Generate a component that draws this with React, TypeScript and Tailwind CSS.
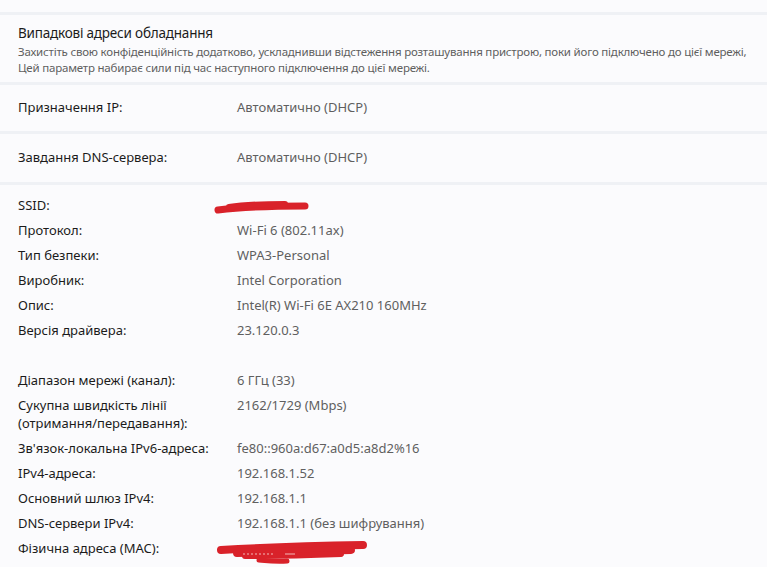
import React from "react";

const rowsA: [string, string][] = [
  ["SSID:", ""],
  ["Протокол:", "Wi-Fi 6 (802.11ax)"],
  ["Тип безпеки:", "WPA3-Personal"],
  ["Виробник:", "Intel Corporation"],
  ["Опис:", "Intel(R) Wi-Fi 6E AX210 160MHz"],
  ["Версія драйвера:", "23.120.0.3"],
];

const rowsB: [string, string][] = [
  ["Діапазон мережі (канал):", "6 ГГц (33)"],
  ["Сукупна швидкість лінії (отримання/передавання):", "2162/1729 (Mbps)"],
  ["Зв'язок-локальна IPv6-адреса:", "fe80::960a:d67:a0d5:a8d2%16"],
  ["IPv4-адреса:", "192.168.1.52"],
  ["Основний шлюз IPv4:", "192.168.1.1"],
  ["DNS-сервери IPv4:", "192.168.1.1 (без шифрування)"],
  ["Фізична адреса (MAC):", ""],
];

// red marker strokes hiding ssid / mac
function Scribble({ wide }: { wide?: boolean }) {
  if (wide) {
    return (
      <svg width="160" height="28" viewBox="0 0 160 28" className="absolute left-[-22px] top-[0px]">
        <g stroke="#d9222a" fill="none" strokeLinecap="round" strokeLinejoin="round">
          <path d="M6 11 C40 9 90 7 148 6" strokeWidth="8" />
          <path d="M22 14 C60 13 100 12 136 11" strokeWidth="8" />
          <path d="M30 17 C60 17 100 16 126 15" strokeWidth="6" />
          <path d="M44 21 C54 22 62 23 72 22" strokeWidth="5" />
        </g>
        <path d="M28 15 H58" stroke="#f2b8b8" strokeWidth="1" strokeDasharray="2 2" />
        <path d="M70 15 H80" stroke="#f2b8b8" strokeWidth="1" />
      </svg>
    );
  }
  return (
    <svg width="100" height="18" viewBox="0 0 100 18" className="absolute left-[-24px] top-[2px]">
      <g stroke="#d9222a" fill="none" strokeLinecap="round">
        <path d="M5 12 C30 9 60 8 92 8" strokeWidth="7" />
        <path d="M16 9 C35 6 55 6 72 6" strokeWidth="6" />
      </g>
    </svg>
  );
}

function Row({ label, value, scribble }: { label: string; value: string; scribble?: "ssid" | "mac" }) {
  return (
    <div className="flex items-start leading-[18px] min-h-[18px]">
      <div className="w-[219px] shrink-0 text-[#1b1b1b] pr-4">{label}</div>
      <div className="relative text-[#5f5f5f]">
        {value}
        {scribble === "ssid" && <Scribble />}
        {scribble === "mac" && <Scribble wide />}
      </div>
    </div>
  );
}

export default function App() {
  return (
    <div
      className="w-[767px] h-[567px] overflow-hidden bg-[#eff1f5] flex flex-col gap-[3px] text-[13px]"
      style={{ fontFamily: '"Segoe UI", "Noto Sans", sans-serif' }}
    >
      <div className="h-[12px] bg-[#fbfbfd] shrink-0" />
      <div className="bg-[#fbfbfd] shrink-0 h-[67px] pl-[18px] pt-[9px]">
        <div className="text-[13.5px] tracking-[-0.2px] text-[#1b1b1b] leading-[18px]">Випадкові адреси обладнання</div>
        <div className="text-[11.5px] tracking-[-0.2px] text-[#5f5f5f] leading-[16px] mt-[2px] whitespace-nowrap">
          Захистіть свою конфіденційність додатково, ускладнивши відстеження розташування пристрою, поки його підключено до цієї мережі,
          <br />
          Цей параметр набирає сили під час наступного підключення до цієї мережі.
        </div>
      </div>
      <div className="bg-[#fbfbfd] shrink-0 h-[46px] pl-[18px] flex items-center">
        <div className="w-[219px] text-[#1b1b1b]">Призначення IP:</div>
        <div className="text-[#5f5f5f]">Автоматично (DHCP)</div>
      </div>
      <div className="bg-[#fbfbfd] shrink-0 h-[48px] pl-[18px] flex items-center">
        <div className="w-[219px] text-[#1b1b1b]">Завдання DNS-сервера:</div>
        <div className="text-[#5f5f5f]">Автоматично (DHCP)</div>
      </div>
      <div className="bg-[#fbfbfd] flex-1 pl-[18px] pt-[11px]">
        <div className="flex flex-col gap-[7px]">
          {rowsA.map(([l, v]) => (
            <Row key={l} label={l} value={v} scribble={l === "SSID:" ? "ssid" : undefined} />
          ))}
        </div>
        <div className="flex flex-col gap-[7px] mt-[32px]">
          {rowsB.map(([l, v]) => (
            <Row key={l} label={l} value={v} scribble={l.startsWith("Фізична") ? "mac" : undefined} />
          ))}
        </div>
      </div>
    </div>
  );
}
